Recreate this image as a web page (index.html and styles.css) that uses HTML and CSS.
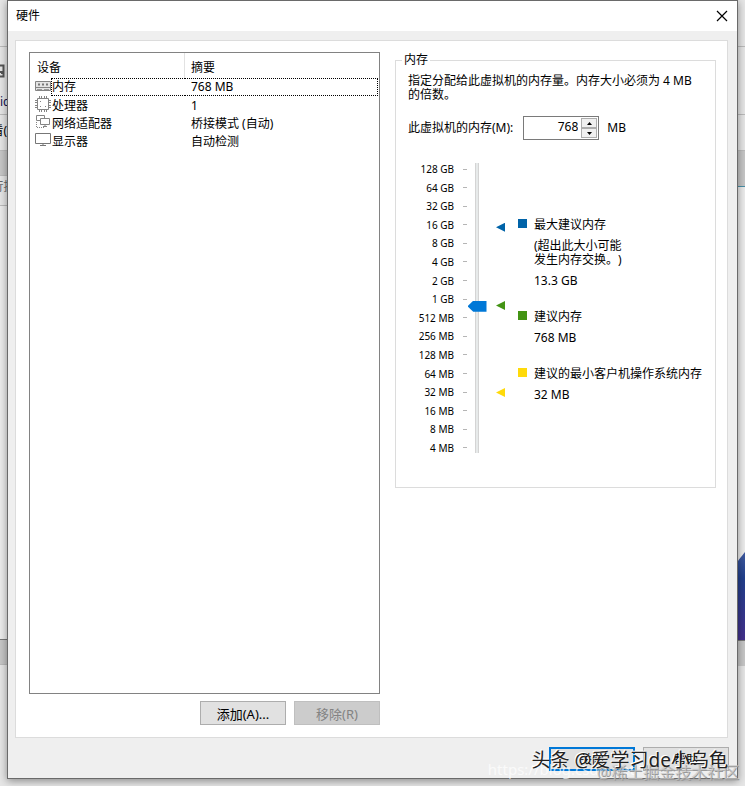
FILE: index.html
```html
<!DOCTYPE html>
<html lang="zh-CN">
<head>
    <meta charset="UTF-8">
    <meta name="viewport" content="width=device-width, initial-scale=1.0">
    <title>硬件</title>
    <link rel="stylesheet" href="styles.css">
</head>
<body>
    <div class="desktop">
        <div class="behind behind-left">
            <div class="strip strip-menu"></div>
            <div class="strip strip-tools">
                <svg width="7" height="14" viewBox="0 0 7 14"><path d="M0 1.5H3.5V12.5H0M0 8H2V10" fill="none" stroke="#555" stroke-width="2"/></svg>
                <span>ic</span>
            </div>
            <div class="strip strip-row">看(</div>
            <div class="strip strip-dark"></div>
            <div class="strip strip-text">行提</div>
            <div class="strip strip-page"></div>
            <div class="strip strip-dark"></div>
        </div>

        <main class="dialog">
            <header class="titlebar">
                <h1>硬件</h1>
                <button type="button" class="close" aria-label="关闭">
                    <svg width="12" height="12" viewBox="0 0 12 12"><path d="M1 1L11 11M11 1L1 11" stroke="#000" stroke-width="1.2"/></svg>
                </button>
            </header>

            <div class="panel">
                <section class="devices">
                    <div class="device-list">
                        <table>
                            <thead>
                                <tr><th>设备</th><th>摘要</th></tr>
                            </thead>
                            <tbody>
                                <tr class="selected">
                                    <td><div class="device"><svg width="16" height="16" viewBox="0 0 16 16"><path d="M.5 3.5H15.5V12.5H.5Z" fill="#e4e4e4" stroke="#848484"/><path d="M1 9.5H15" stroke="#848484"/><path d="M3 6.5H5M7 6.5H9M11 6.5H13" stroke="#777" stroke-width="2"/><path d="M2 11.5H7M9 11.5H14" stroke="#999"/></svg><span>内存</span></div></td>
                                    <td>768 MB</td>
                                </tr>
                                <tr>
                                    <td><div class="device"><svg width="16" height="16" viewBox="0 0 16 16"><path d="M2.5 2.5H13.5V13.5H2.5Z" fill="#fff" stroke="#848484"/><path d="M4.5 0V2M6.5 0V2M9.5 0V2M11.5 0V2M4.5 14V16M6.5 14V16M9.5 14V16M11.5 14V16M0 4.5H2M0 6.5H2M0 9.5H2M0 11.5H2M14 4.5H16M14 6.5H16M14 9.5H16M14 11.5H16" stroke="#848484"/><path d="M5 5.5H6M10 10.5H11M5 10.5H6" stroke="#848484"/></svg><span>处理器</span></div></td>
                                    <td>1</td>
                                </tr>
                                <tr>
                                    <td><div class="device"><svg width="16" height="16" viewBox="0 0 16 16"><path d="M5 6.5H1.5V1.5H9.5V4M5.5 4.5H14.5V10.5H5.5ZM8 12.5H12M10 10V13" fill="none" stroke="#848484"/><path d="M1.5 8V13.5H10" fill="none" stroke="#848484" stroke-dasharray="1 1"/></svg><span>网络适配器</span></div></td>
                                    <td>桥接模式 (自动)</td>
                                </tr>
                                <tr>
                                    <td><div class="device"><svg width="16" height="16" viewBox="0 0 16 16"><path d="M.5 1.5H15.5V11.5H.5Z" fill="#fff" stroke="#777"/><path d="M5 13.5H11M8 12V13" stroke="#777"/></svg><span>显示器</span></div></td>
                                    <td>自动检测</td>
                                </tr>
                            </tbody>
                        </table>
                    </div>
                    <div class="actions">
                        <button type="button">添加(A)...</button>
                        <button type="button" disabled>移除(R)</button>
                    </div>
                </section>

                <fieldset class="memory">
                    <legend>内存</legend>
                    <p>指定分配给此虚拟机的内存量。内存大小必须为 4 MB 的倍数。</p>
                    <div class="amount">
                        <label for="memorySize">此虚拟机的内存(M):</label>
                        <div class="spinner">
                            <input type="text" id="memorySize" value="768">
                            <div class="steps">
                                <button type="button" aria-label="增加"><svg width="5" height="3" viewBox="0 0 5 3"><path d="M0 3L2.5 0L5 3Z"/></svg></button>
                                <button type="button" aria-label="减少"><svg width="5" height="3" viewBox="0 0 5 3"><path d="M0 0L2.5 3L5 0Z"/></svg></button>
                            </div>
                        </div>
                        <span>MB</span>
                    </div>

                    <div class="scale">
                        <ul class="ticks">
                            <li>128 GB</li>
                            <li>64 GB</li>
                            <li>32 GB</li>
                            <li>16 GB</li>
                            <li>8 GB</li>
                            <li>4 GB</li>
                            <li>2 GB</li>
                            <li>1 GB</li>
                            <li>512 MB</li>
                            <li>256 MB</li>
                            <li>128 MB</li>
                            <li>64 MB</li>
                            <li>32 MB</li>
                            <li>16 MB</li>
                            <li>8 MB</li>
                            <li>4 MB</li>
                        </ul>
                        <input type="range" class="slider" min="0" max="150" value="76" aria-label="内存">
                        <div class="markers">
                            <i class="max" style="top: 22%"></i>
                            <i class="recommended" style="top: 49%"></i>
                            <i class="min" style="top: 79%"></i>
                        </div>
                        <ul class="hints">
                            <li class="max">
                                <span>最大建议内存</span>
                                <small>(超出此大小可能<br>发生内存交换。)</small>
                                <span>13.3 GB</span>
                            </li>
                            <li class="recommended">
                                <span>建议内存</span>
                                <span>768 MB</span>
                            </li>
                            <li class="min">
                                <span>建议的最小客户机操作系统内存</span>
                                <span>32 MB</span>
                            </li>
                        </ul>
                    </div>
                </fieldset>
            </div>

            <footer class="footer">
                <button type="button" class="default">关闭</button>
                <button type="button">帮助</button>
            </footer>
        </main>

        <div class="behind behind-right">
            <div class="strip strip-menu"></div>
            <div class="strip strip-tools"></div>
            <div class="strip strip-row"></div>
            <div class="strip strip-dark"></div>
            <div class="strip strip-page"><div class="artwork"></div></div>
            <div class="strip strip-dark"></div>
        </div>

        <span class="mark mark-link">https://blog.csdn.net</span>
        <span class="mark mark-site">@稀土掘金技术社区</span>
        <span class="mark mark-author">头条 @爱学习de小乌龟</span>
    </div>
</body>
</html>
```
FILE: styles.css
```css
* { box-sizing: border-box; }
body { margin: 0; background: #e6e6e6; color: #000; font: 12px/16px "Noto Sans", "Noto Sans CJK SC", sans-serif; text-spacing-trim: space-all; }
ul { list-style: none; margin: 0; padding: 0; }
button, input { font: inherit; color: inherit; }
svg { display: block; flex: none; }

.desktop { position: relative; display: grid; grid-template-columns: 7px minmax(0, 1fr) 7px; min-height: 100vh; padding-bottom: 7px; overflow: hidden; }

/* window behind the dialog */
.behind { display: flex; flex-direction: column; overflow: hidden; white-space: nowrap; }
.strip { flex: none; border-bottom: 1px solid #bbb; }
.strip-menu { height: 47px; }
.strip-tools { height: 68px; padding-top: 17px; color: #101050; }
.strip-tools span { display: block; margin-top: 16px; }
.strip-row { display: flex; justify-content: flex-end; height: 36px; padding-top: 8px; }
.strip-dark { height: 25px; background: #c6c6c6; }
.strip-text { display: flex; justify-content: center; height: 30px; padding-top: 3px; color: #666; }
.strip-page { height: 434px; background: #ececec; border-color: #777; }
.behind-right .strip-dark { height: 36px; border-color: #4a90a8; }
.behind-right .strip-dark:last-child { height: 25px; border: 0; }
.behind-right .strip-page { height: 454px; display: flex; flex-direction: column; justify-content: flex-end; }
.artwork { height: 88px; background: linear-gradient(#3f5aa0, #213f8c 30%, #43308c); clip-path: polygon(0 10%, 100% 0, 100% 100%, 0 100%); }

.dialog { display: flex; flex-direction: column; z-index: 1; background: #efefef; border: 1px solid #6a6a6a; box-shadow: 0 2px 8px rgba(0, 0, 0, .4); }
.titlebar { display: flex; justify-content: space-between; align-items: center; height: 30px; padding: 0 9px 0 8px; background: #fff; }
.titlebar h1 { margin: 0; font-size: 12px; font-weight: normal; }
.close { padding: 0; border: 0; background: none; }

.panel { flex: 1; display: grid; grid-template-columns: 351px minmax(0, 1fr); gap: 15px; align-items: start; margin: 9px 9px 0 7px; padding: 11px 11px 12px 13px; background: #fff; border: 1px solid #dcdcdc; }
.devices { display: flex; flex-direction: column; align-self: stretch; gap: 7px; }
.device-list { flex: 1; border: 1px solid #828282; padding-right: 1px; }
table { width: 100%; border-spacing: 0; table-layout: fixed; }
th, td { padding: 0 0 0 6px; text-align: left; font-weight: normal; }
th { height: 25px; padding-top: 4px; }
th:first-child { width: 155px; padding-left: 7px; border-right: 1px solid #e2e2e2; }
td { height: 18px; padding-top: 2px; }
td:first-child { padding: 0 0 0 5px; }
.device { display: flex; height: 18px; }
.device span { flex: 1; padding: 2px 0 0 1px; }
.selected td:last-child { padding-top: 0; border: 1px dotted #000; border-left: 0; }
.selected span { padding: 0; border: 1px dotted #000; border-right: 0; }

.actions, .footer { display: flex; justify-content: flex-end; gap: 8px; }
.actions button, .footer button { width: 86px; height: 24px; padding: 1px 0 0; background: #e1e1e1; border: 1px solid #adadad; }
.actions button { font-size: 13px; }
.actions button:disabled { background: #ccc; border-color: #bfbfbf; color: #838383; }
.footer { padding: 9px 8px 7px; }
.footer .default { border: 2px solid #0078d7; }

.memory { min-width: 0; height: 436px; margin: 0; padding: 6px 12px; border: 1px solid #dcdcdc; }
.memory legend { margin-left: -6px; padding: 0 2px; }
.memory p { margin: 0 0 14px; line-height: 14px; }
.amount { display: flex; align-items: center; gap: 8px; }
.amount label { margin-right: 2px; }
.spinner { display: flex; width: 76px; height: 24px; border: 1px solid #7a7a7a; padding: 1px; }
.spinner input { flex: 1; width: 0; padding: 0 3px 2px; border: 0; text-align: right; }
.steps { display: grid; grid-template-rows: 1fr 1fr; width: 16px; }
.steps button { display: grid; place-items: center; padding: 0; background: #f0f0f0; border: 1px solid #adadad; }

.scale { display: grid; grid-template-columns: 59px 20px 31px minmax(0, 1fr); height: 290px; margin-top: 23px; }
.ticks { display: flex; flex-direction: column; justify-content: space-between; margin-bottom: -1px; }
.ticks li { display: flex; justify-content: flex-end; align-items: center; gap: 9px; font-size: 10px; line-height: 12px; }
.ticks li::after { content: ""; width: 4px; height: 1px; background: #b5b5b5; }
.slider { appearance: none; writing-mode: vertical-lr; direction: rtl; width: 20px; height: 290px; margin: 0; background: linear-gradient(90deg, #d4d4d4 1px, #e7eaea 1px 3px, #d4d4d4 3px) center / 4px 100% no-repeat; }
.slider::-webkit-slider-thumb { appearance: none; width: 19px; height: 11px; background: #0078d7; clip-path: polygon(0 50%, 30% 0, 100% 0, 100% 100%, 30% 100%); }
.markers { position: relative; }
.markers i { position: absolute; left: 9px; width: 9px; height: 9px; margin-top: -4px; background: currentColor; clip-path: polygon(0 50%, 100% 0, 100% 100%); }
.max { color: #0063a8; }
.recommended { color: #439414; }
.min { color: #ffda0a; }

.hints { display: flex; flex-direction: column; gap: 20px; padding-top: 54px; white-space: nowrap; }
.hints li { display: grid; grid-template-columns: 9px minmax(0, 1fr); column-gap: 7px; row-gap: 5px; }
.hints li:first-child { row-gap: 6px; }
.hints li::before { content: ""; height: 9px; margin-top: 2px; background: currentColor; }
.hints span, .hints small { grid-column: 2; color: #000; }
.hints small { font-size: 12px; line-height: 14px; }

.mark { position: absolute; z-index: 2; white-space: nowrap; pointer-events: none; }
.mark-link { right: 110px; bottom: 9px; font-size: 15px; color: rgba(255, 255, 255, .7); }
.mark-site { right: 6px; bottom: 4px; font-size: 16px; line-height: 20px; color: rgba(200, 200, 200, .7); text-shadow: 1px 1px #999; }
.mark-author { right: 17px; bottom: 15px; font-size: 19px; line-height: 22px; color: #222; text-shadow: -1px -1px #fff; }
```
